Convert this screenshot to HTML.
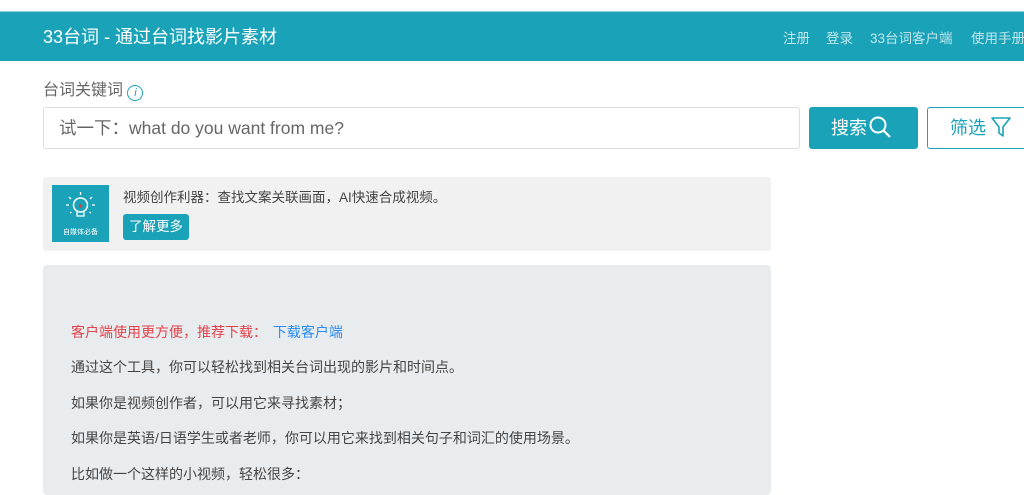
<!DOCTYPE html>
<html><head><meta charset="utf-8"><style>
*{margin:0;padding:0;box-sizing:border-box}
body{width:1024px;height:483px;overflow:hidden;background:#fff;font-family:"Liberation Sans","Noto Sans CJK SC",sans-serif;position:relative;color:#555}
.abs{position:absolute}
.hdr{left:0;top:11px;width:1024px;height:50px;background:#1aa3b8;border-top:1px solid #8fd0da}
.title{left:43px;top:23px;color:#fff;font-size:18px;white-space:nowrap}
.nav{top:27px;color:#bfe6ec;font-size:13.5px;white-space:nowrap}
.t{font-size:14px;color:#444;white-space:nowrap;left:71px}
</style></head><body>
<div class="abs hdr"></div>
<div class="abs title">33台词 - 通过台词找影片素材</div>
<div class="abs nav" style="left:783px">注册</div>
<div class="abs nav" style="left:826px">登录</div>
<div class="abs nav" style="left:870px">33台词客户端</div>
<div class="abs nav" style="left:971px">使用手册</div>

<div class="abs" style="left:43px;top:76px;font-size:16px;color:#666;white-space:nowrap">台词关键词 <span style="display:inline-block;width:16px;height:16px;border:1px solid #1aa3b8;border-radius:50%;color:#1aa3b8;font-size:11px;text-align:center;line-height:14px;font-style:italic;vertical-align:-1px">i</span></div>

<div class="abs" style="left:43px;top:107px;width:757px;height:42px;border:1px solid #ddd;border-radius:3px;padding-left:15px;line-height:40px;font-size:17.5px;color:#666;white-space:nowrap">试一下：what do you want from me?</div>

<div class="abs" style="left:809px;top:107px;width:109px;height:42px;background:#1aa3b8;border-radius:3px;color:#fff;font-size:18px;line-height:42px;padding-left:22px;white-space:nowrap">搜索<svg width="24" height="24" viewBox="0 0 24 24" style="vertical-align:-5px;margin-left:1px"><circle cx="10" cy="10" r="7.5" fill="none" stroke="#fff" stroke-width="2"/><path d="M15.5 15.5L22 22" stroke="#fff" stroke-width="2.2"/></svg></div>

<div class="abs" style="left:927px;top:107px;width:110px;height:42px;border:1px solid #1aa3b8;border-radius:3px;color:#1aa3b8;font-size:18px;line-height:40px;padding-left:22px;white-space:nowrap">筛选 <svg width="20" height="22" viewBox="0 0 20 22" style="vertical-align:-4px"><path d="M1 2H19L12 11V20L8 17V11Z" fill="none" stroke="#1aa3b8" stroke-width="1.6" stroke-linejoin="round"/></svg></div>

<div class="abs" style="left:43px;top:177px;width:728px;height:74px;background:#f1f1f1;border-radius:3px"></div>
<div class="abs" style="left:52px;top:185px;width:57px;height:57px;background:#1aa3b8">
<svg width="57" height="40" viewBox="0 0 57 40"><circle cx="28.5" cy="20" r="7" fill="none" stroke="#fff" stroke-width="1.5"/><circle cx="28.5" cy="21" r="1.6" fill="#e33"/><path d="M25 27v4h7v-4" fill="none" stroke="#fff" stroke-width="1.3"/><g stroke="#fff" stroke-width="1.3"><path d="M28.5 7v3M17 12l2 2M40 12l-2 2M14 20h3M40 20h3M18 28l1.5-1M39 28l-1.5-1"/></g></svg>
<div style="position:absolute;left:0;top:42px;width:57px;text-align:center;color:#fff;font-size:7px">自媒体必备</div></div>
<div class="abs" style="left:123px;top:186px;font-size:13.5px;color:#444;white-space:nowrap">视频创作利器：查找文案关联画面，AI快速合成视频。</div>
<div class="abs" style="left:123px;top:214px;width:66px;height:26px;background:#1aa3b8;border-radius:3px;color:#fff;font-size:13.5px;line-height:26px;text-align:center">了解更多</div>

<div class="abs" style="left:43px;top:265px;width:728px;height:230px;background:#e9ecef;border-radius:4px"></div>
<div class="abs t" style="top:322px;color:#e0434b">客户端使用更方便，推荐下载： <span style="color:#2a8cf0;margin-left:2px">下载客户端</span></div>
<div class="abs t" style="top:357px">通过这个工具，你可以轻松找到相关台词出现的影片和时间点。</div>
<div class="abs t" style="top:393px">如果你是视频创作者，可以用它来寻找素材；</div>
<div class="abs t" style="top:428px">如果你是英语/日语学生或者老师，你可以用它来找到相关句子和词汇的使用场景。</div>
<div class="abs t" style="top:464px">比如做一个这样的小视频，轻松很多：</div>
</body></html>
